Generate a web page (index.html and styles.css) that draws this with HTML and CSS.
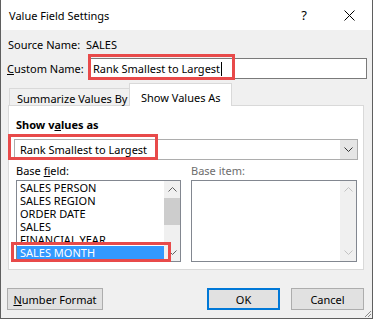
FILE: index.html
```html
<!DOCTYPE html>
<html lang="en">
<head>
  <meta charset="UTF-8">
  <title>Value Field Settings</title>
  <link rel="stylesheet" href="styles.css">
</head>
<body>
  <div class="window">
    <div class="titlebar">
      <span class="title">Value Field Settings</span>
      <span class="tb-btn help">?</span>
      <span class="tb-btn">
        <svg width="11" height="11" viewBox="0 0 11 11"><path d="M0.5 0.5 L10.5 10.5 M10.5 0.5 L0.5 10.5" stroke="#000" stroke-width="1" fill="none"/></svg>
      </span>
    </div>

    <div class="content">
      <div class="row source">
        <span class="label">Source Name:</span>
        <span>SALES</span>
      </div>
      <div class="row custom">
        <label class="label custom-label"><u>C</u>ustom Name:</label>
        <div class="input">Rank Smallest to Largest<span class="caret"></span><span class="mark mark-input"></span></div>
      </div>

      <div class="tabs">
        <div class="tab">Summarize Values By</div>
        <div class="tab active">Show Values As</div>
      </div>

      <div class="panel">
        <div class="heading">Show v<u>a</u>lues as</div>
        <div class="combo">
          <span class="combo-text">Rank Smallest to Largest</span>
          <span class="combo-btn">
            <svg width="9" height="5" viewBox="0 0 9 5"><path d="M0.5 0.5 L4.5 4.5 L8.5 0.5" stroke="#333" fill="none"/></svg>
          </span>
          <span class="mark mark-combo"></span>
        </div>

        <div class="lists">
          <div class="field">
            <div class="flabel">Base <u>f</u>ield:</div>
            <div class="listbox">
              <div class="items">
                <div class="item">SALES PERSON</div>
                <div class="item">SALES REGION</div>
                <div class="item">ORDER DATE</div>
                <div class="item">SALES</div>
                <div class="item">FINANCIAL YEAR</div>
                <div class="item selected">SALES MONTH</div>
              </div>
              <div class="scrollbar">
                <div class="arrow">
                  <svg width="9" height="5" viewBox="0 0 9 5"><path d="M0.5 4.5 L4.5 0.5 L8.5 4.5" stroke="#606060" fill="none"/></svg>
                </div>
                <div class="thumb"></div>
                <div class="track"></div>
                <div class="arrow">
                  <svg width="9" height="5" viewBox="0 0 9 5"><path d="M0.5 0.5 L4.5 4.5 L8.5 0.5" stroke="#606060" fill="none"/></svg>
                </div>
              </div>
              <span class="mark mark-list"></span>
            </div>
          </div>

          <div class="field field-item">
            <div class="flabel disabled">Base item:</div>
            <div class="listbox">
              <div class="items"></div>
              <div class="scrollbar">
                <div class="arrow">
                  <svg width="9" height="5" viewBox="0 0 9 5"><path d="M0.5 4.5 L4.5 0.5 L8.5 4.5" stroke="#c2c2c2" fill="none"/></svg>
                </div>
                <div class="track"></div>
                <div class="arrow">
                  <svg width="9" height="5" viewBox="0 0 9 5"><path d="M0.5 0.5 L4.5 4.5 L8.5 0.5" stroke="#c2c2c2" fill="none"/></svg>
                </div>
              </div>
            </div>
          </div>
        </div>
      </div>

      <div class="buttons">
        <button class="btn btn-wide"><u>N</u>umber Format</button>
        <button class="btn btn-ok">OK</button>
        <button class="btn btn-cancel">Cancel</button>
      </div>
    </div>

    <svg class="grip" width="9" height="9" viewBox="0 0 9 9">
      <path d="M8 2 L2 8 M8 5 L5 8" stroke="#8a8a8a" stroke-width="1" fill="none"/>
    </svg>
  </div>
</body>
</html>
```

FILE: styles.css
```css
* {
  box-sizing: border-box;
}
body {
  margin: 0;
  font-family: "Noto Sans", "Open Sans", sans-serif;
  font-size: 11px;
  color: #000;
  background: #fff;
}
u {
  text-decoration-thickness: 1px;
  text-underline-offset: 1px;
}
.window {
  position: relative;
  width: 373px;
  height: 319px;
  border: 1px solid #5f5f5f;
  border-top: none;
  background: #f0f0f0;
  display: flex;
  flex-direction: column;
}
.titlebar {
  height: 30px;
  background: #fff;
  display: flex;
  align-items: center;
}
.title {
  flex: 1;
  padding-left: 8px;
}
.tb-btn {
  width: 46px;
  height: 30px;
  display: flex;
  align-items: center;
  justify-content: center;
}
.help {
  font-size: 13px;
  padding-left: 2px;
}
.content {
  flex: 1;
  padding: 0 8px 0 6px;
}
.row {
  display: flex;
  align-items: center;
}
.source {
  margin-top: 7px;
  height: 14px;
  padding-left: 1px;
}
.source .label {
  width: 78px;
}
.custom {
  margin-top: 7px;
  height: 21px;
}
.custom-label {
  width: 82px;
}
.input {
  position: relative;
  flex: 1;
  height: 21px;
  margin-right: -3px;
  border: 1px solid #7a7a7a;
  background: #fff;
  padding-left: 3px;
  line-height: 19px;
  display: flex;
  align-items: center;
}
.caret {
  width: 1px;
  height: 14px;
  background: #000;
  margin-left: 1px;
}
.mark {
  position: absolute;
  border: 3px solid #e84a4a;
  z-index: 3;
}
.mark-input {
  left: -2px;
  top: -5px;
  width: 147px;
  height: 26px;
}

/* tabs */
.tabs {
  display: flex;
  align-items: flex-end;
  height: 23px;
  margin-top: 4px;
  padding-left: 2px;
  position: relative;
  z-index: 2;
}
.tab {
  height: 17px;
  width: 121px;
  margin-bottom: 1px;
  padding: 3px 0 0 7px;
  line-height: 14px;
  border: 1px solid #d9d9d9;
  border-bottom: none;
  white-space: nowrap;
}
.tab.active {
  height: 23px;
  width: 103px;
  margin-bottom: 0;
  margin-left: -1px;
  padding: 7px 0 0 11px;
  background: #fff;
}
.panel {
  margin: -1px 0 0 1px;
  height: 165px;
  border: 1px solid #d9d9d9;
  background: #fff;
  padding: 11px 5px 7px 5px;
}
.heading {
  margin-left: 2px;
  font-weight: bold;
  line-height: 16px;
}
.combo {
  position: relative;
  margin-top: 6px;
  height: 21px;
  border: 1px solid #adadad;
  display: flex;
}
.combo-text {
  flex: 1;
  padding-left: 5px;
  line-height: 19px;
}
.combo-btn {
  width: 17px;
  background: #e5e5e5;
  display: flex;
  align-items: center;
  justify-content: center;
}
.mark-combo {
  left: -7px;
  top: -6px;
  width: 150px;
  height: 26px;
}

/* base field / item lists */
.lists {
  display: flex;
  gap: 10px;
  margin-top: 4px;
  margin-left: 2px;
}
.field {
  width: 165px;
}
.field-item {
  width: 166px;
}
.flabel {
  line-height: 14px;
}
.flabel.disabled {
  color: #6d6d6d;
}
.listbox {
  position: relative;
  margin-top: 2px;
  height: 82px;
  border: 1px solid #828790;
  background: #fff;
  display: flex;
}
.items {
  flex: 1;
  overflow: hidden;
}
.item {
  height: 13px;
  line-height: 13px;
  padding-left: 3px;
  white-space: nowrap;
}
.item.selected {
  background: #3399ff;
  color: #fff;
}
.scrollbar {
  width: 16px;
  background: #f0f0f0;
  display: flex;
  flex-direction: column;
}
.arrow {
  height: 17px;
  display: flex;
  align-items: center;
  justify-content: center;
}
.thumb {
  height: 27px;
  background: #cdcdcd;
}
.track {
  flex: 1;
}
.mark-list {
  left: -6px;
  top: 61px;
  width: 160px;
  height: 20px;
}

/* bottom buttons */
.buttons {
  display: flex;
  margin-top: 18px;
}
.btn {
  height: 22px;
  width: 73px;
  padding: 0;
  font-family: inherit;
  font-size: 11px;
  color: #000;
  background: #e1e1e1;
  border: 1px solid #adadad;
}
.btn-wide {
  width: 96px;
}
.btn-ok {
  margin-left: auto;
  border: 2px solid #0078d7;
}
.btn-cancel {
  margin-left: 11px;
}
.grip {
  position: absolute;
  right: 0;
  bottom: 0;
}
```
